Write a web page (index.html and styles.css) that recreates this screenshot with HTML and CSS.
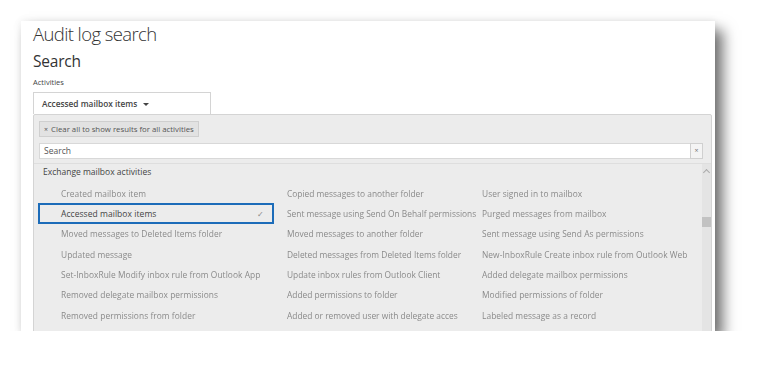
FILE: index.html
```html
<!DOCTYPE html>
<html lang="en">
<head>
    <meta charset="UTF-8">
    <title>Audit log search</title>
    <link rel="stylesheet" href="styles.css">
</head>
<body>
    <div class="panel">
        <h1 class="title">Audit log search</h1>
        <h2 class="subtitle">Search</h2>
        <div class="label">Activities</div>
        <div class="picker">Accessed mailbox items <span class="caret"></span></div>
        <div class="dropdown">
            <div class="chip-row">
                <div class="chip"><span class="chip-x">×</span> Clear all to show results for all activities</div>
            </div>
            <div class="search-row">
                <div class="search-box">Search</div>
                <div class="search-clear">×</div>
            </div>
            <div class="list">
                <div class="list-body">
                    <div class="group">Exchange mailbox activities</div>
                    <div class="grid">
                        <div class="item">Created mailbox item</div>
                        <div class="item">Copied messages to another folder</div>
                        <div class="item">User signed in to mailbox</div>
                        <div class="item selected">Accessed mailbox items <span class="check">✓</span></div>
                        <div class="item">Sent message using Send On Behalf permissions</div>
                        <div class="item">Purged messages from mailbox</div>
                        <div class="item">Moved messages to Deleted Items folder</div>
                        <div class="item">Moved messages to another folder</div>
                        <div class="item">Sent message using Send As permissions</div>
                        <div class="item">Updated message</div>
                        <div class="item">Deleted messages from Deleted Items folder</div>
                        <div class="item">New-InboxRule Create inbox rule from Outlook Web</div>
                        <div class="item">Set-InboxRule Modify inbox rule from Outlook App</div>
                        <div class="item">Update inbox rules from Outlook Client</div>
                        <div class="item">Added delegate mailbox permissions</div>
                        <div class="item">Removed delegate mailbox permissions</div>
                        <div class="item">Added permissions to folder</div>
                        <div class="item">Modified permissions of folder</div>
                        <div class="item">Removed permissions from folder</div>
                        <div class="item">Added or removed user with delegate acces</div>
                        <div class="item">Labeled message as a record</div>
                    </div>
                </div>
                <div class="scrollbar">
                    <div class="arrow"></div>
                    <div class="thumb"></div>
                </div>
            </div>
        </div>
    </div>
</body>
</html>
```

FILE: styles.css
```css
body {
    margin: 0;
    background-color: #fff;
    font-family: "Open Sans", "Noto Sans", sans-serif;
    color: #333;
}
.panel {
    margin: 21px 0 0 21px;
    width: 679px;
    height: 310px;
    padding: 0 3px 0 12px;
    background-color: #fff;
    overflow: hidden;
    box-shadow: 8px 9px 13px rgba(0, 0, 0, 0.55), 0 0 8px rgba(0, 0, 0, 0.08);
}
.title {
    margin: 0;
    font-size: 18.5px;
    font-weight: 300;
    letter-spacing: -0.6px;
    line-height: 25px;
    color: #333;
}
.subtitle {
    margin: 4px 0 0;
    font-size: 15.5px;
    font-weight: 400;
    letter-spacing: -0.2px;
    line-height: 22px;
    color: #333;
}
.label {
    margin-top: 5px;
    font-size: 7.5px;
    line-height: 10px;
    color: #444;
}
.picker {
    margin-top: 5px;
    width: 168px;
    height: 21px;
    padding-left: 8px;
    border: 1px solid #d4d4d4;
    border-bottom: none;
    font-size: 8.3px;
    font-weight: 600;
    line-height: 22px;
    color: #444;
}
.caret {
    display: inline-block;
    margin-left: 4px;
    border-left: 3px solid transparent;
    border-right: 3px solid transparent;
    border-top: 3px solid #444;
    vertical-align: middle;
}
.dropdown {
    background-color: #ececec;
    border: 1px solid #d4d4d4;
    border-radius: 2px 2px 0 0;
    height: 220px;
}
.chip-row {
    display: flex;
    padding: 6px 5px 0;
}
.chip {
    height: 14px;
    padding: 0 4px;
    background-color: #e2e2e2;
    border: 1px solid #cfcfcf;
    font-size: 7.8px;
    line-height: 14px;
    color: #555;
}
.chip-x {
    font-size: 7px;
    margin-right: 1px;
}
.search-row {
    display: flex;
    margin: 6px 8px 0 5px;
    height: 16px;
}
.search-box {
    flex: 1;
    background-color: #fff;
    border: 1px solid #d8d8d8;
    border-right: none;
    padding-left: 4px;
    font-size: 8.5px;
    line-height: 14px;
    color: #555;
}
.search-clear {
    width: 11px;
    background-color: #f4f4f4;
    border: 1px solid #d0d0d0;
    font-size: 7px;
    line-height: 14px;
    text-align: center;
    color: #777;
}
.list {
    display: flex;
    margin-top: 4px;
    border-top: 1px solid #dedede;
    height: 200px;
}
.list-body {
    flex: 1;
    padding: 2px 0 0 9px;
}
.group {
    font-size: 8.5px;
    line-height: 12px;
    color: #444;
}
.grid {
    display: grid;
    grid-template-columns: 236px 196px 1fr;
    grid-auto-rows: 20.35px;
    margin-top: 5px;
    margin-left: -5px;
}
.item {
    display: flex;
    align-items: center;
    padding-left: 23px;
    font-size: 8.4px;
    letter-spacing: 0.05px;
    color: #8a8a8a;
    white-space: nowrap;
    filter: blur(0.35px);
}
.item:nth-child(3n+2) {
    padding-left: 13px;
    letter-spacing: 0;
}
.item:nth-child(3n) {
    padding-left: 12px;
}
.item.selected {
    border: 2px solid #1c6cb9;
    color: #444;
    font-size: 8.5px;
    filter: none;
    padding-left: 21px;
}
.check {
    margin-left: auto;
    margin-right: 8px;
    font-size: 8px;
    color: #888;
}
.scrollbar {
    width: 9px;
    background-color: #e4e4e4;
}
.arrow {
    margin: 6px auto 0;
    width: 4px;
    height: 4px;
    border-left: 1px solid #aaa;
    border-top: 1px solid #aaa;
    transform: rotate(45deg);
}
.thumb {
    margin-top: 42px;
    height: 10px;
    background-color: #c2c2c2;
}
```
